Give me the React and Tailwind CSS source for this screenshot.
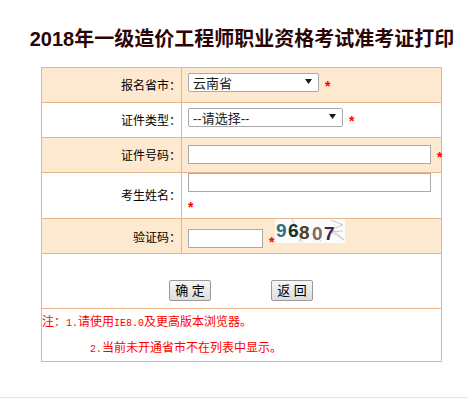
import React from "react";

const cjk = "font-['Liberation_Sans','Noto_Sans_CJK_SC',sans-serif]";

const Star = ({ className = "" }) => (
  <span className={`block shrink-0 text-[#f00] text-[14px] leading-none font-bold ${className}`}>*</span>
);

const Captcha = () => (
  <svg width="70" height="24" viewBox="0 0 70 24" className="block bg-[#fbfbfb]">
    <g stroke="#b9bdbd" strokeWidth="0.8" fill="none">
      <path d="M17 0 L27 23" />
      <path d="M30 10 L24 23" />
      <path d="M56 1 L68 6 L57 10 L69 21 L52 10" />
      <path d="M54 13 L68 12" />
      <path d="M36 14 L46 22" />
    </g>
    <g fontFamily="'Liberation Sans',sans-serif" fontWeight="700" fontSize="19">
      <text x="1" y="17.5" fill="#2f6f86">9</text>
      <text x="13" y="18" fill="#12302a">6</text>
      <text x="24" y="19.5" fill="#4f4220">8</text>
      <text x="37" y="21" fill="#7a6a62">0</text>
      <text x="49" y="21" fill="#4a1f48">7</text>
    </g>
  </svg>
);

const Label = ({ children, shade, className = "pt-[1px]" }) => (
  <td className={`border border-[#e9b48c] text-right text-[12px] text-black ${shade ? "bg-[#fde8d0]" : ""} ${className}`}>
    {children}
  </td>
);

const Field = ({ children, shade }) => (
  <td className={`border border-[#e9b48c] pl-[6px] align-top ${shade ? "bg-[#fde8d0]" : ""}`}>
    {children}
  </td>
);

const Select = ({ value, className }) => (
  <span className={`relative block h-[19px] ${className}`}>
    <select
      defaultValue={value}
      className="block h-[19px] w-full appearance-none overflow-hidden bg-white border border-[#a9a9a9] rounded-[2px] pl-[4px] pt-[1px] text-[13px] leading-[18px] text-[#222]"
    >
      <option>{value}</option>
    </select>
    <svg width="7" height="5" viewBox="0 0 7 5" className="absolute right-[7px] top-[6px] pointer-events-none">
      <path d="M0 0 H7 L3.5 5 Z" fill="#1a1a1a" />
    </svg>
  </span>
);

const inputCls = "block shrink-0 h-[19px] bg-white border border-[#a9a9a9]";
const btnCls = "w-[42px] h-[21px] border border-[#9a9a9a] rounded-[2px] bg-gradient-to-b from-[#f6f6f6] to-[#dddddd] text-[13px] leading-none text-black";
const mono = "font-['Liberation_Mono'] text-[10px] leading-none";

export default function App() {
  return (
    <div className={`relative h-[400px] w-[468px] overflow-hidden bg-white ${cjk}`}>
      <h1 className="h-[67px] pl-[16px] pt-[27px] text-center text-[20px] leading-[24px] font-bold text-[#2b0505] whitespace-nowrap">
        2018年一级造价工程师职业资格考试准考证打印
      </h1>

      <table className="ml-[41px] w-[401px] table-fixed border-collapse">
        <colgroup>
          <col className="w-[140px]" />
          <col />
        </colgroup>
        <tbody>
          <tr className="h-[35px]">
            <Label shade>报名省市：</Label>
            <Field shade>
              <div className="flex items-start pt-[5px]">
                <Select value="云南省" className="w-[131px]" />
                <Star className="ml-[6px] mt-[6px]" />
              </div>
            </Field>
          </tr>
          <tr className="h-[35px]">
            <Label>证件类型：</Label>
            <Field>
              <div className="flex items-start pt-[5px]">
                <Select value="--请选择--" className="w-[155px]" />
                <Star className="ml-[6px] mt-[6px]" />
              </div>
            </Field>
          </tr>
          <tr className="h-[35px]">
            <Label shade>证件号码：</Label>
            <Field shade>
              <div className="flex items-start pt-[7px] whitespace-nowrap">
                <input className={`${inputCls} w-[243px]`} />
                <Star className="ml-[6px] mt-[5px]" />
              </div>
            </Field>
          </tr>
          <tr className="h-[46px]">
            <Label>考生姓名：</Label>
            <Field>
              <input className={`${inputCls} w-[243px]`} />
              <Star className="mt-[8px] h-[14px]" />
            </Field>
          </tr>
          <tr className="h-[35px]">
            <Label shade className="pt-[3px]">验证码：</Label>
            <Field shade>
              <div className="flex items-start">
                <input className={`${inputCls} w-[75px] mt-[10px]`} />
                <Star className="ml-[6px] mt-[16px]" />
                <div className="ml-[1px]">
                  <Captcha />
                </div>
              </div>
            </Field>
          </tr>
          <tr className="h-[55px]">
            <td colSpan={2} className="border border-[#e9b48c] align-top">
              <div className="flex justify-start gap-[60px] pl-[127px] pt-[26px]">
                <button className={btnCls}>确 定</button>
                <button className={btnCls}>返 回</button>
              </div>
            </td>
          </tr>
          <tr className="h-[53px]">
            <td colSpan={2} className="border border-[#e9b48c] text-[12px] text-[#f00] align-middle">
              <div className="h-[26px] leading-[26px]">
                注：<span className={mono}>1.</span>请使用
                <span className={mono}>IE8.0</span>及更高版本浏览器。
              </div>
              <div className="h-[26px] leading-[26px] pl-[48px]">
                <span className={mono}>2.</span>当前未开通省市不在列表中显示。
              </div>
            </td>
          </tr>
        </tbody>
      </table>

      <div className="absolute bottom-0 left-0 h-[3px] w-full border-t border-[#efe3d6] bg-white" />
    </div>
  );
}
